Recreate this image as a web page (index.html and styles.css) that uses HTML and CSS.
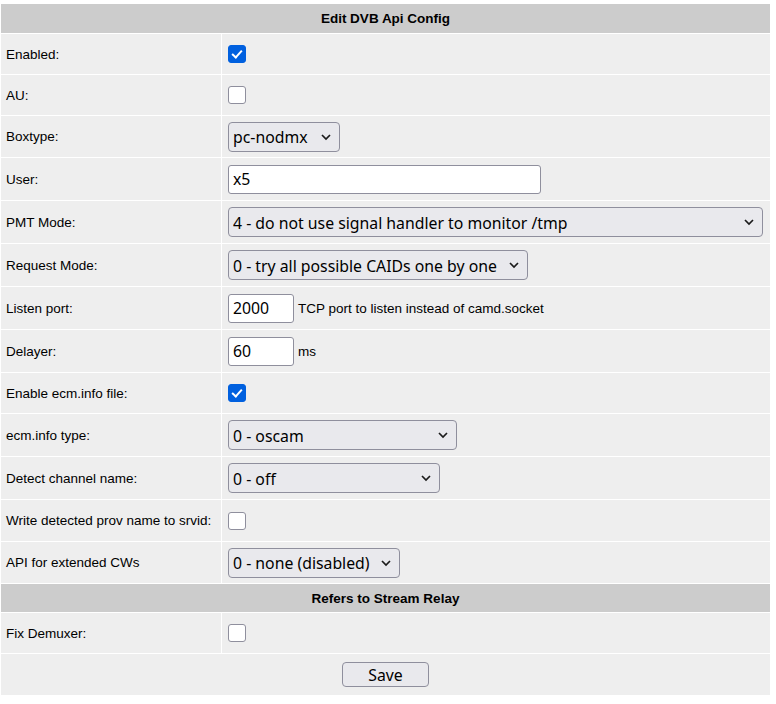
FILE: index.html
```html
<!DOCTYPE html>
<html>
<head>
    <title>Edit DVB Api Config</title>
    <link rel="stylesheet" href="styles.css">
</head>
<body>
    <form id="dvbapiForm">
    <table class="config">
        <tr class="head first">
            <th colspan="2">Edit DVB Api Config</th>
        </tr>
        <tr>
            <td class="label">Enabled:</td>
            <td class="field"><input type="checkbox" class="check" name="enabled" checked></td>
        </tr>
        <tr>
            <td class="label">AU:</td>
            <td class="field"><input type="checkbox" class="check" name="au"></td>
        </tr>
        <tr class="mid">
            <td class="label">Boxtype:</td>
            <td class="field">
                <span class="select-wrap">
                    <select class="select w-boxtype" name="boxtype">
                        <option>pc-nodmx</option>
                    </select>
                    <svg class="chevron" viewBox="0 0 10 6"><path d="M1 1 L5 5 L9 1"/></svg>
                </span>
            </td>
        </tr>
        <tr class="tall">
            <td class="label">User:</td>
            <td class="field"><input type="text" class="text w-user" name="user" value="x5"></td>
        </tr>
        <tr class="tall">
            <td class="label">PMT Mode:</td>
            <td class="field">
                <span class="select-wrap">
                    <select class="select w-pmt" name="pmt_mode">
                        <option>4 - do not use signal handler to monitor /tmp</option>
                    </select>
                    <svg class="chevron" viewBox="0 0 10 6"><path d="M1 1 L5 5 L9 1"/></svg>
                </span>
            </td>
        </tr>
        <tr class="tall">
            <td class="label">Request Mode:</td>
            <td class="field">
                <span class="select-wrap">
                    <select class="select w-request" name="request_mode">
                        <option>0 - try all possible CAIDs one by one</option>
                    </select>
                    <svg class="chevron" viewBox="0 0 10 6"><path d="M1 1 L5 5 L9 1"/></svg>
                </span>
            </td>
        </tr>
        <tr class="tall">
            <td class="label">Listen port:</td>
            <td class="field"><input type="text" class="text w-port" name="listen_port" value="2000"><span class="hint">TCP port to listen instead of camd.socket</span></td>
        </tr>
        <tr class="tall">
            <td class="label">Delayer:</td>
            <td class="field"><input type="text" class="text w-port" name="delayer" value="60"><span class="hint">ms</span></td>
        </tr>
        <tr>
            <td class="label">Enable ecm.info file:</td>
            <td class="field"><input type="checkbox" class="check" name="ecminfo" checked></td>
        </tr>
        <tr class="tall">
            <td class="label">ecm.info type:</td>
            <td class="field">
                <span class="select-wrap">
                    <select class="select w-ecmtype" name="ecminfo_type">
                        <option>0 - oscam</option>
                    </select>
                    <svg class="chevron" viewBox="0 0 10 6"><path d="M1 1 L5 5 L9 1"/></svg>
                </span>
            </td>
        </tr>
        <tr class="tall">
            <td class="label">Detect channel name:</td>
            <td class="field">
                <span class="select-wrap">
                    <select class="select w-channel" name="read_sdt">
                        <option>0 - off</option>
                    </select>
                    <svg class="chevron" viewBox="0 0 10 6"><path d="M1 1 L5 5 L9 1"/></svg>
                </span>
            </td>
        </tr>
        <tr class="mid">
            <td class="label">Write detected prov name to srvid:</td>
            <td class="field"><input type="checkbox" class="check" name="write_sdt_prov"></td>
        </tr>
        <tr class="mid">
            <td class="label">API for extended CWs</td>
            <td class="field">
                <span class="select-wrap">
                    <select class="select w-extcw" name="extended_cw_api">
                        <option>0 - none (disabled)</option>
                    </select>
                    <svg class="chevron" viewBox="0 0 10 6"><path d="M1 1 L5 5 L9 1"/></svg>
                </span>
            </td>
        </tr>
        <tr class="head">
            <th colspan="2">Refers to Stream Relay</th>
        </tr>
        <tr>
            <td class="label">Fix Demuxer:</td>
            <td class="field"><input type="checkbox" class="check" name="demuxer_fix"></td>
        </tr>
        <tr class="mid">
            <td colspan="2" class="actions"><input type="submit" class="button" value="Save"></td>
        </tr>
    </table>
    </form>
</body>
</html>
```

FILE: styles.css
```css
body {
    margin: 0;
    padding-top: 3px;
    background-color: #fff;
    font-family: "Liberation Sans", Arial, sans-serif;
    font-size: 13.5px;
    color: #000;
}
.config {
    width: 771px;
    border-collapse: separate;
    border-spacing: 1px;
}
.config th {
    height: 28px;
    padding: 0;
    background-color: #ccc;
    font-weight: bold;
    text-align: center;
}
.config tr.first th {
    height: 29px;
}
.config td {
    height: 40px;
    padding: 0 5px;
    background-color: #eee;
    vertical-align: middle;
}
.config tr.mid td {
    height: 41px;
}
.config tr.tall td {
    height: 42px;
}
.config td.label {
    width: 210px;
}
.config td.field {
    padding-left: 6px;
}
.config td.actions {
    text-align: center;
}

/* form controls */
.check {
    -webkit-appearance: none;
    appearance: none;
    position: relative;
    display: inline-block;
    width: 18px;
    height: 18px;
    margin: 0;
    vertical-align: middle;
    border: 1px solid #8f8f9d;
    border-radius: 3px;
    background-color: #fff;
}
.check:checked {
    border-color: #0060df;
    background-color: #0060df;
}
.check:checked::after {
    content: "";
    position: absolute;
    left: 5px;
    top: 2px;
    width: 4px;
    height: 8px;
    border: solid #fff;
    border-width: 0 2.5px 2.5px 0;
    transform: rotate(42deg);
}
.text,
.select,
.button {
    font-family: "Noto Sans", "Open Sans", sans-serif;
    font-size: 15.8px;
    color: #000;
    box-sizing: border-box;
    vertical-align: middle;
    margin: 0;
}
.text {
    height: 29px;
    padding: 0 4px;
    border: 1px solid #8f8f9d;
    border-radius: 3px;
    background-color: #fff;
}
.w-user { width: 313px; }
.w-port { width: 66px; }
.hint {
    margin-left: 4px;
    vertical-align: middle;
}
.select-wrap {
    position: relative;
    display: inline-block;
    vertical-align: middle;
}
.select {
    -webkit-appearance: none;
    appearance: none;
    display: block;
    height: 30px;
    padding: 1px 24px 0 4px;
    border: 1px solid #8f8f9d;
    border-radius: 4px;
    background-color: #e9e9ed;
}
.chevron {
    position: absolute;
    right: 9px;
    top: 12px;
    width: 10px;
    height: 6px;
    overflow: visible;
    pointer-events: none;
}
.chevron path {
    fill: none;
    stroke: #1b1b1b;
    stroke-width: 1.7;
}
.w-boxtype { width: 112px; }
.w-pmt { width: 535px; }
.w-request { width: 300px; }
.w-ecmtype { width: 229px; }
.w-channel { width: 212px; }
.w-extcw { width: 172px; }
.button {
    width: 87px;
    height: 25px;
    padding: 0;
    border: 1px solid #8f8f9d;
    border-radius: 4px;
    background-color: #e9e9ed;
    cursor: pointer;
}
.button:hover {
    background-color: #d0d0d7;
}
```
